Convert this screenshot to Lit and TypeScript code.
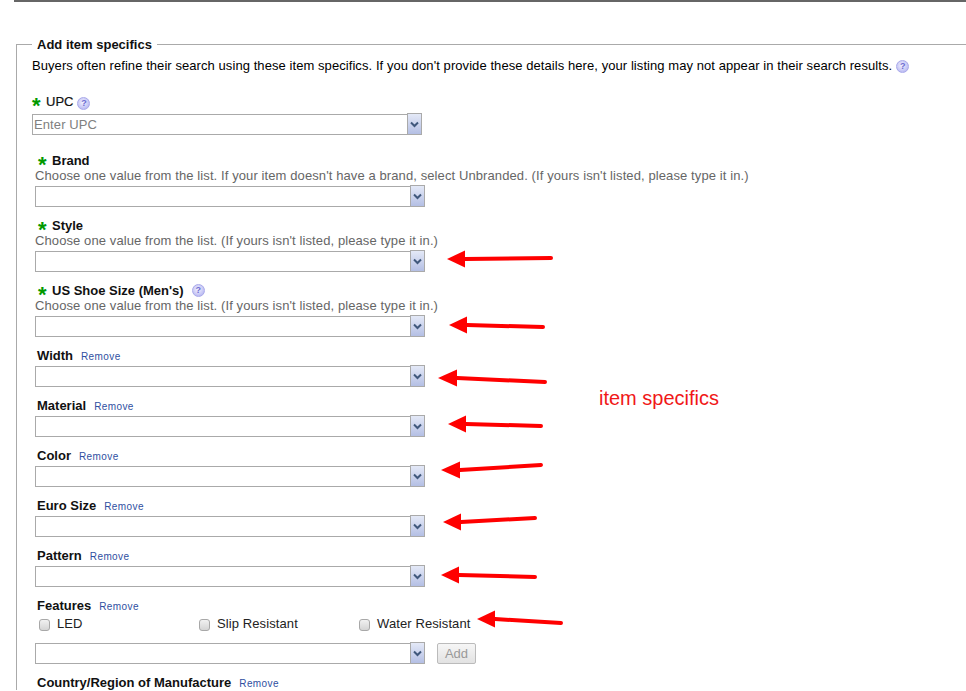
import { LitElement, html, css, svg } from "lit";
import { customElement } from "lit/decorators.js";

type Field = { name: string; star?: boolean; help?: boolean; desc?: string; remove?: boolean; cls: string };

const DESC = "Choose one value from the list. (If yours isn't listed, please type it in.)";
const fields: Field[] = [
  { name: "Brand", star: true, desc: "Choose one value from the list. If your item doesn't have a brand, select Unbranded. (If yours isn't listed, please type it in.)", cls: "req" },
  { name: "Style", star: true, desc: DESC, cls: "req" },
  { name: "US Shoe Size (Men's)", star: true, help: true, desc: DESC, cls: "req" },
  { name: "Width", remove: true, cls: "opt" },
  { name: "Material", remove: true, cls: "opt" },
  { name: "Color", remove: true, cls: "opt" },
  { name: "Euro Size", remove: true, cls: "opt" },
  { name: "Pattern", remove: true, cls: "opt" },
];

const arrows: number[][] = [
  [447, 259, 465, 8.5, 551, 258],
  [449, 325, 467, 8.5, 543, 327],
  [438, 378, 457, 8.5, 545, 382],
  [448, 424, 466, 8.5, 541, 426],
  [441, 470, 460, 8.5, 541, 465],
  [443, 522, 461, 8.5, 535, 518],
  [441, 575, 459, 8.5, 535, 577],
  [477, 619, 495, 8.5, 561, 623],
];

@customElement("app-root")
export class AppRoot extends LitElement {
  static styles = css`
    :host {
      display: block;
      position: relative;
      width: 966px;
      height: 691px;
      overflow: hidden;
      background: #fff;
      font-family: "Liberation Sans", Arial, sans-serif;
      font-size: 13px;
      color: #000;
    }
    .rule {
      height: 2px;
      margin-left: 14px;
      background: #666;
    }
    fieldset {
      margin: 35px -40px 0 16px;
      padding: 0;
      border: 1px solid #aaa;
      border-width: 1px 1px 0 1px;
      min-width: 0;
    }
    legend {
      margin-left: 15px;
      padding: 0 5px;
      font-weight: bold;
      font-size: 13px;
      line-height: 15px;
      color: #111;
    }
    .intro {
      margin: 0;
      padding: 6px 0 0 15px;
      height: 15px;
      line-height: 15px;
      letter-spacing: 0.07px;
      white-space: nowrap;
    }
    .upc {
      padding: 20px 0 0 15px;
    }
    .upc .label {
      height: 16px;
      margin-bottom: 5px;
    }
    .req {
      padding: 17px 0 0 18px;
    }
    .req + .req {
      padding-top: 10px;
    }
    .req .label {
      margin-left: 3px;
    }
    .req .desc {
      margin-bottom: 3px;
    }
    .opt {
      padding: 9px 0 0 18px;
    }
    .opt .label {
      margin-left: 2px;
      height: 16px;
      margin-bottom: 3px;
    }
    .label {
      display: flex;
      align-items: center;
      height: 15px;
      font-weight: bold;
      white-space: nowrap;
      color: #111;
    }
    .star {
      flex: none;
      width: 11px;
      margin-right: 3px;
      color: #090;
      font-size: 22px;
      font-weight: bold;
      line-height: 15px;
      height: 15px;
      position: relative;
      top: 4px;
    }
    .upc .name {
      font-weight: normal;
      -webkit-text-stroke: 0.2px #111;
    }
    .help {
      display: inline-block;
      flex: none;
      width: 13px;
      height: 13px;
      margin: 4px 0 0 4px;
      border-radius: 50%;
      background: radial-gradient(circle at 45% 40%, #f2f2ff, #a9a9ee);
      border: 1px solid #a9a9ea;
      box-sizing: border-box;
      color: #6c6cd0;
      font-size: 9px;
      font-weight: bold;
      line-height: 11px;
      text-align: center;
    }
    .req .help {
      margin-left: 8px;
      margin-top: 0;
    }
    .intro .help {
      vertical-align: 1px;
      margin: 0 0 0 4px;
      letter-spacing: 0;
    }
    .desc {
      height: 15px;
      line-height: 15px;
      color: #666;
      letter-spacing: 0.1px;
      white-space: nowrap;
    }
    .remove {
      margin-left: 8px;
      font-weight: normal;
      font-size: 10px;
      letter-spacing: 0.4px;
      color: #2f4f9f;
      position: relative;
      top: 1px;
    }
    .select {
      display: flex;
      align-items: flex-start;
      height: 22px;
    }
    .input {
      box-sizing: border-box;
      width: 376px;
      height: 21px;
      border: 1px solid #aaa;
      padding-left: 1px;
      line-height: 19px;
      color: #808080;
      font-size: 13px;
      letter-spacing: 0.1px;
      background: #fff;
    }
    .btn {
      box-sizing: border-box;
      width: 15px;
      height: 22px;
      margin: -1px 0 0 -1px;
      border: 1px solid #aaa;
      background: linear-gradient(#e4e9f7, #b4bfe4);
      display: flex;
      align-items: center;
      justify-content: center;
    }
    .features {
      padding: 9px 0 0 20px;
    }
    .features .label {
      height: 16px;
    }
    .checks {
      display: grid;
      grid-template-columns: 160px 160px auto;
      height: 22px;
      padding: 3px 0 0 2px;
      box-sizing: border-box;
      justify-content: start;
    }
    .check {
      display: flex;
      align-items: center;
      gap: 7px;
      height: 15px;
      letter-spacing: 0.1px;
      color: #222;
    }
    .box {
      box-sizing: border-box;
      width: 11px;
      height: 12px;
      margin-top: 2px;
      border: 1px solid #a8a8a8;
      border-radius: 3px;
      background: linear-gradient(#f1f1f1, #d4d4d4);
    }
    .addrow {
      display: flex;
      margin: 7px 0 0 -2px;
      padding-top: 1px;
    }
    .add {
      box-sizing: border-box;
      width: 39px;
      height: 21px;
      margin-left: 12px;
      border: 1px solid #bbb;
      border-radius: 2px;
      background: linear-gradient(#f6f6f6, #e2e2e2);
      color: #999;
      font-size: 13px;
      line-height: 19px;
      text-align: center;
    }
    .last {
      padding: 10px 0 0 20px;
    }
    .overlay {
      position: absolute;
      inset: 0;
      width: 966px;
      height: 691px;
      pointer-events: none;
    }
    .note {
      position: absolute;
      left: 599px;
      top: 386px;
      font-size: 20px;
      line-height: 24px;
      color: #f01818;
      white-space: nowrap;
    }
  `;

  private combo(value = "") {
    return html`<div class="select">
      <div class="input">${value}</div>
      <div class="btn">
        <svg width="9" height="7" viewBox="0 0 9 7">
          <path d="M1 1.5 L4.5 5 L8 1.5" fill="none" stroke="#40587c" stroke-width="2" />
        </svg>
      </div>
    </div>`;
  }

  private field(f: Field) {
    return html`<div class=${f.cls}>
      <div class="label">
        ${f.star ? html`<span class="star">*</span>` : ""}
        <span>${f.name}</span>
        ${f.help ? html`<span class="help">?</span>` : ""}
        ${f.remove ? html`<span class="remove">Remove</span>` : ""}
      </div>
      ${f.desc ? html`<div class="desc">${f.desc}</div>` : ""}
      ${this.combo()}
    </div>`;
  }

  render() {
    return html`
      <div class="rule"></div>
      <fieldset>
        <legend>Add item specifics</legend>
        <p class="intro">
          Buyers often refine their search using these item specifics. If you don't provide these details here, your listing may not appear in their search results.<span class="help">?</span>
        </p>
        <div class="upc">
          <div class="label">
            <span class="star">*</span><span class="name">UPC</span><span class="help">?</span>
          </div>
          ${this.combo("Enter UPC")}
        </div>
        ${fields.map((f) => this.field(f))}
        <div class="features">
          <div class="label">Features<span class="remove">Remove</span></div>
          <div class="checks">
            <div class="check"><span class="box"></span>LED</div>
            <div class="check"><span class="box"></span>Slip Resistant</div>
            <div class="check"><span class="box"></span>Water Resistant</div>
          </div>
          <div class="addrow">
            ${this.combo()}
            <div class="add">Add</div>
          </div>
        </div>
        <div class="last">
          <div class="label">Country/Region of Manufacture<span class="remove">Remove</span></div>
        </div>
      </fieldset>
      <svg class="overlay" viewBox="0 0 966 691">
        ${arrows.map(([tx, ty, bx, hw, ex, ey]) => svg`
          <path d="M${bx} ${ty} L${ex} ${ey}" stroke="#f00" stroke-width="4" stroke-linecap="round" />
          <polygon points="${tx},${ty} ${bx},${ty - hw} ${bx},${ty + hw}" fill="#f00" />
        `)}
      </svg>
      <div class="note">item specifics</div>
    `;
  }
}
